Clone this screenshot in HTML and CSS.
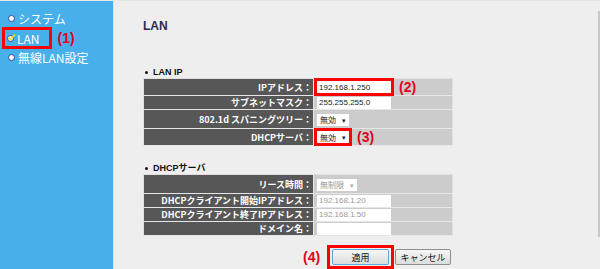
FILE: index.html
```html
<!DOCTYPE html>
<html lang="ja">

<head>
  <meta charset="UTF-8" />
  <meta name="viewport" content="width=device-width, initial-scale=1.0" />
  <title>LAN</title>
  <link rel="stylesheet" href="styles.css">
</head>

<body>
  <div class="side">
    <ul class="menu">
      <li><span class="dot"></span>システム</li>
      <li class="current">
        <span class="mark">
          <span class="dot check">
            <svg width="9" height="9" viewBox="0 0 9 9">
              <path d="M1.5 4.5 L3.5 6.8 L8 1.5" fill="none" stroke="#e8e020" stroke-width="1.6" />
            </svg>
          </span>LAN
        </span>
        <span class="note">(1)</span>
      </li>
      <li><span class="dot"></span>無線LAN設定</li>
    </ul>
  </div>

  <div class="main">
    <h1>LAN</h1>

    <h2>LAN IP</h2>
    <table class="form">
      <tr>
        <th>IPアドレス：</th>
        <td>
          <div class="cell">
            <input type="text" class="text marked" value="192.168.1.250" />
            <span class="note">(2)</span>
          </div>
        </td>
      </tr>
      <tr>
        <th>サブネットマスク：</th>
        <td><input type="text" class="text" value="255.255.255.0" /></td>
      </tr>
      <tr>
        <th>802.1d スパニングツリー：</th>
        <td><span class="select">無効<i>▾</i></span></td>
      </tr>
      <tr>
        <th>DHCPサーバ：</th>
        <td>
          <div class="cell">
            <span class="select marked">無効<i>▾</i></span>
            <span class="note">(3)</span>
          </div>
        </td>
      </tr>
    </table>

    <h2 class="second">DHCPサーバ</h2>
    <table class="form">
      <tr>
        <th>リース時間：</th>
        <td><span class="select off">無制限<i>▾</i></span></td>
      </tr>
      <tr>
        <th>DHCPクライアント開始IPアドレス：</th>
        <td><input type="text" class="text off" value="192.168.1.20" /></td>
      </tr>
      <tr>
        <th>DHCPクライアント終了IPアドレス：</th>
        <td><input type="text" class="text off" value="192.168.1.50" /></td>
      </tr>
      <tr>
        <th>ドメイン名：</th>
        <td><input type="text" class="text" value="" /></td>
      </tr>
    </table>

    <div class="actions">
      <span class="note">(4)</span>
      <span class="apply-box"><button class="btn apply">適用</button></span>
      <button class="btn">キャンセル</button>
    </div>
  </div>

  <div class="edge"></div>
</body>

</html>
```

FILE: styles.css
```css
* {
  margin: 0;
  padding: 0;
  list-style: none;
  box-sizing: border-box;
}

html,
body {
  height: 100%;
}

body {
  display: flex;
  background-color: #eeeeee;
  font-family: "Liberation Sans", "Noto Sans CJK JP", sans-serif;
  border-top: 1px solid #e6e6e6;
}

/* 左メニュー */
.side {
  width: 114px;
  background-color: #47afea;
  border-right: 1px solid #cfe6f5;
  padding-top: 8px;
}

.menu li {
  display: flex;
  align-items: center;
  height: 19.5px;
  padding-left: 8px;
  color: #fff;
  font-family: "Noto Sans CJK JP", sans-serif;
  font-size: 12px;
}

.dot {
  width: 7px;
  height: 7px;
  margin-right: 3px;
  border-radius: 50%;
  background-color: #fff;
  border: 1px solid #2f4a9a;
  position: relative;
}

.dot svg {
  position: absolute;
  left: -1px;
  top: -3px;
}

.current .mark {
  display: flex;
  align-items: center;
  outline: 3px solid #f00;
  outline-offset: 0;
  padding: 0 9px 0 2px;
  margin-left: -3px;
  height: 16px;
}

.current .note {
  margin-left: 9px;
}

.note {
  color: #e4001b;
  font-family: "Liberation Sans", sans-serif;
  font-weight: bold;
  font-size: 14px;
}

/* メイン */
.main {
  flex: 1;
  padding: 17px 0 0 29px;
}

h1 {
  font-size: 12px;
  line-height: 16px;
  color: #2c2c50;
  margin-bottom: 32px;
}

h2 {
  display: flex;
  align-items: center;
  font-size: 9px;
  line-height: 12px;
  color: #111;
  margin-bottom: 0;
}

h2::before {
  content: "";
  width: 3px;
  height: 3px;
  border-radius: 50%;
  background-color: #111;
  margin: 0 5px 0 2px;
}

h2.second {
  margin-top: 16px;
}

.form {
  border-collapse: collapse;
  width: 310px;
  border: 1px solid #e0e0e0;
}

.form tr {
  border-bottom: 1px solid #e6e6e6;
}

.form th {
  width: 170px;
  height: 14px;
  background-color: #575757;
  border-right: 1px solid #e6e6e6;
  color: #fff;
  font-family: "Noto Sans CJK JP", sans-serif;
  font-size: 9px;
  font-weight: bold;
  text-align: right;
  padding: 0 1px 0 0;
  white-space: nowrap;
}

.form td {
  background-color: #cccccc;
  padding: 0 0 0 3px;
  vertical-align: middle;
}

.cell {
  display: flex;
  align-items: center;
  gap: 8px;
}

.text {
  display: block;
  width: 74px;
  height: 12px;
  border: none;
  background-color: #fff;
  font-family: "Liberation Sans", sans-serif;
  font-size: 8px;
  color: #222;
  padding-left: 2px;
}

.text.off {
  color: #999;
}

.marked {
  outline: 3px solid #f00;
  outline-offset: 0;
}

.select {
  display: inline-flex;
  align-items: center;
  height: 12px;
  padding: 0 3px 0 3px;
  background-color: #fff;
  font-family: "Noto Sans CJK JP", sans-serif;
  font-size: 8px;
  color: #222;
  vertical-align: middle;
}

.select i {
  font-style: normal;
  font-size: 7px;
  margin-left: 6px;
}

.select.off {
  color: #999;
}

.select.off i {
  color: #aaa;
}

/* ボタン */
.actions {
  display: flex;
  align-items: center;
  margin: 9px 0 0 160px;
}

.actions .note {
  margin-right: 7px;
}

.apply-box {
  display: flex;
  border: 3px solid #f00;
  padding: 1px 2px;
  margin-right: 1px;
}

.btn {
  height: 16px;
  width: 56px;
  font-family: "Noto Sans CJK JP", sans-serif;
  font-size: 9px;
  color: #111;
  border: 1px solid #8d8d8d;
  border-radius: 2px;
  background: linear-gradient(#f6f6f6, #dcdcdc);
}

.btn.apply {
  width: 57px;
  border-color: #5aa7d8;
}

.edge {
  width: 2px;
  height: 226px;
  margin: 10px 0 0 0;
  background-color: #c9c9c9;
}
```
